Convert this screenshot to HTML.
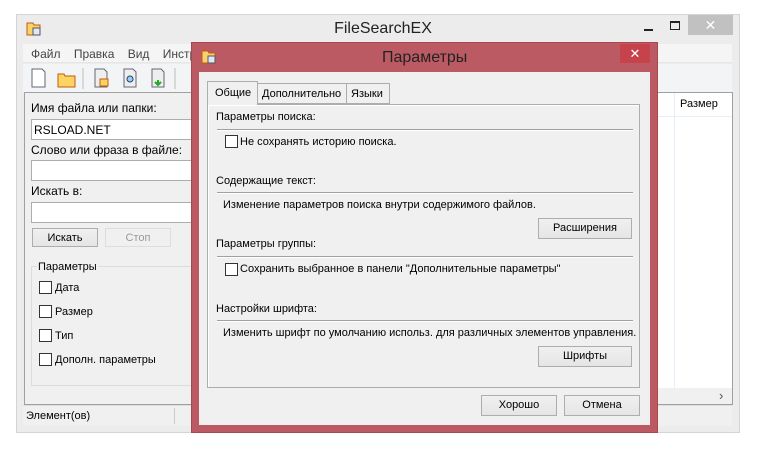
<!DOCTYPE html>
<html><head><meta charset="utf-8"><style>
*{box-sizing:border-box;margin:0;padding:0}
body{width:766px;height:460px;background:#fff;font-family:"Liberation Sans","DejaVu Sans",sans-serif;font-size:11px;color:#000;position:relative;overflow:hidden}
.a{position:absolute;white-space:nowrap}
.cb{position:absolute;width:13px;height:13px;border:1px solid #333;background:#fff}
.btn{position:absolute;border:1px solid #adadad;background:linear-gradient(#f0f0f0,#e5e5e5);text-align:center;line-height:18px}
.inp{position:absolute;background:#fff;border:1px solid #abadb3}
.line{position:absolute;height:2px;border-top:1px solid #a0a0a0;border-bottom:1px solid #fff}
</style></head><body>
<div class="a" style="left:16px;top:14px;width:724px;height:419px;background:#ececec;border:1px solid #d4d4d4"></div>
<svg class="a" style="left:26px;top:22px" width="16" height="14"><path d="M1 1h6l1 2h6v10H1z" fill="#f8d26a" stroke="#c55a11"/><rect x="7" y="6" width="7" height="7" fill="#dfe8f3" stroke="#556"/></svg>
<div class="a" style="left:0;width:766px;top:20px;text-align:center;font-size:16px;color:#222">FileSearchEX</div>
<div class="a" style="left:644px;top:29px;width:9px;height:2px;background:#222"></div>
<div class="a" style="left:670px;top:21px;width:10px;height:9px;border:1px solid #222;border-top-width:2px"></div>
<div class="a" style="left:688px;top:15px;width:45px;height:20px;background:#c1c1c1;color:#fff;text-align:center;font-size:14px;line-height:20px">✕</div>
<div class="a" style="left:23px;top:44px;width:709px;height:19px;background:#f5f5f5;border-bottom:1px solid #e6e6e6"></div>
<div class="a" style="left:31px;top:47px;color:#444;font-size:12px;word-spacing:10px">Файл Правка Вид Инстр</div>
<div class="a" style="left:23px;top:64px;width:709px;height:28px;background:#f3f4f6"></div>
<svg class="a" style="left:30px;top:67px" width="160" height="22">
<path d="M2 2h10l3 3v15H2z" fill="#fff" stroke="#667"/>
<path d="M28 7h6l1 2h10v11H28z" fill="#fcd462" stroke="#c55a11"/>
<line x1="53" y1="1" x2="53" y2="22" stroke="#bbb"/>
<path d="M65 2h9l3 3v15H65z" fill="#eee" stroke="#667"/><rect x="70" y="12" width="8" height="7" fill="#fcd462" stroke="#c55a11"/>
<path d="M94 2h9l3 3v15H94z" fill="#eee" stroke="#667"/><circle cx="100" cy="12" r="3" fill="#9cf" stroke="#246"/>
<path d="M122 2h9l3 3v15h-12z" fill="#eee" stroke="#667"/><path d="M128 13v5M125 15l3 3 3-3" stroke="#2a2" stroke-width="2" fill="none"/>
<line x1="145" y1="1" x2="145" y2="22" stroke="#bbb"/>
</svg>
<div class="a" style="left:24px;top:92px;width:180px;height:313px;border:1px solid #a0a0a0;border-right:none;background:#f0f0f0"></div>
<div class="a" style="left:31px;top:101px;font-size:12px">Имя файла или папки:</div>
<div class="inp" style="left:31px;top:119px;width:170px;height:21px;padding:3px 2px;font-size:12px">RSLOAD.NET</div>
<div class="a" style="left:31px;top:143px;font-size:12px">Слово или фраза в файле:</div>
<div class="inp" style="left:31px;top:160px;width:170px;height:21px"></div>
<div class="a" style="left:31px;top:184px;font-size:12px">Искать в:</div>
<div class="inp" style="left:31px;top:202px;width:170px;height:21px"></div>
<div class="btn" style="left:32px;top:228px;width:66px;height:19px">Искать</div>
<div class="btn" style="left:105px;top:228px;width:66px;height:19px;color:#999;background:#f0f0f0;border-color:#ddd">Стоп</div>
<div class="a" style="left:31px;top:266px;width:170px;height:120px;border:1px solid #dcdcdc"></div>
<div class="a" style="left:37px;top:261px;background:#f0f0f0;padding:0 1px">Параметры</div>
<div class="cb" style="left:39px;top:281px"></div><div class="a" style="left:55px;top:282px">Дата</div>
<div class="cb" style="left:39px;top:305px"></div><div class="a" style="left:55px;top:306px">Размер</div>
<div class="cb" style="left:39px;top:329px"></div><div class="a" style="left:55px;top:330px">Тип</div>
<div class="cb" style="left:39px;top:353px"></div><div class="a" style="left:55px;top:354px">Дополн. параметры</div>
<div class="a" style="left:640px;top:92px;width:93px;height:313px;background:#fff;border:1px solid #a0a0a0;border-left:none"></div>
<div class="a" style="left:640px;top:116px;width:92px;height:1px;background:#e8eef7"></div>
<div class="a" style="left:674px;top:93px;width:1px;height:295px;background:#e8eef7"></div>
<div class="a" style="left:680px;top:98px">Размер</div>
<div class="a" style="left:640px;top:388px;width:92px;height:16px;background:#f0f0f0"></div>
<div class="a" style="left:719px;top:388px;font-size:13px;color:#555">›</div>
<div class="a" style="left:23px;top:405px;width:709px;height:21px;background:#f0f0f0;border-top:1px solid #ddd"></div>
<div class="a" style="left:26px;top:410px">Элемент(ов)</div>
<div class="a" style="left:174px;top:408px;width:1px;height:16px;background:#ccc"></div>
<div class="a" style="left:191px;top:42px;width:467px;height:391px;background:#bc5a64;border:1px solid #a9474f"></div>
<svg class="a" style="left:201px;top:50px" width="16" height="14"><path d="M1 1h6l1 2h6v10H1z" fill="#f8d26a" stroke="#c55a11"/><rect x="7" y="6" width="7" height="7" fill="#dfe8f3" stroke="#556"/></svg>
<div class="a" style="left:382px;top:49px;font-size:16px;color:#222">Параметры</div>
<div class="a" style="left:620px;top:44px;width:30px;height:19px;background:#c7434c;color:#fff;text-align:center;line-height:19px;font-size:13px">✕</div>
<div class="a" style="left:199px;top:72px;width:451px;height:353px;background:#f0f0f0"></div>
<div class="a" style="left:257px;top:83px;width:90px;height:21px;border:1px solid #adadad;background:#f0f0f0;padding:4px 0 0 4px">Дополнительно</div>
<div class="a" style="left:347px;top:83px;width:43px;height:21px;border:1px solid #adadad;border-left:none;background:#f0f0f0;padding:4px 0 0 4px">Языки</div>
<div class="a" style="left:207px;top:104px;width:433px;height:284px;border:1px solid #adadad;background:#f0f0f0;box-shadow:inset 1px 1px #fff"></div>
<div class="a" style="left:207px;top:81px;width:51px;height:24px;border:1px solid #adadad;border-bottom:none;background:#f0f0f0;padding:5px 0 0 7px">Общие</div>
<div class="a" style="left:216px;top:111px">Параметры поиска:</div>
<div class="line" style="left:217px;top:129px;width:416px"></div>
<div class="cb" style="left:225px;top:135px"></div><div class="a" style="left:240px;top:136px">Не сохранять историю поиска.</div>
<div class="a" style="left:216px;top:175px">Содержащие текст:</div>
<div class="line" style="left:217px;top:192px;width:416px"></div>
<div class="a" style="left:223px;top:199px">Изменение параметров поиска внутри содержимого файлов.</div>
<div class="btn" style="left:538px;top:218px;width:94px;height:21px;line-height:19px">Расширения</div>
<div class="a" style="left:216px;top:238px">Параметры группы:</div>
<div class="line" style="left:217px;top:256px;width:416px"></div>
<div class="cb" style="left:225px;top:263px"></div><div class="a" style="left:240px;top:263px">Сохранить выбранное в панели "Дополнительные параметры"</div>
<div class="a" style="left:216px;top:303px">Настройки шрифта:</div>
<div class="line" style="left:217px;top:320px;width:416px"></div>
<div class="a" style="left:223px;top:327px">Изменить шрифт по умолчанию использ. для различных элементов управления.</div>
<div class="btn" style="left:538px;top:346px;width:94px;height:21px;line-height:19px">Шрифты</div>
<div class="btn" style="left:481px;top:395px;width:76px;height:21px;line-height:19px">Хорошо</div>
<div class="btn" style="left:564px;top:395px;width:76px;height:21px;line-height:19px">Отмена</div>
</body></html>
